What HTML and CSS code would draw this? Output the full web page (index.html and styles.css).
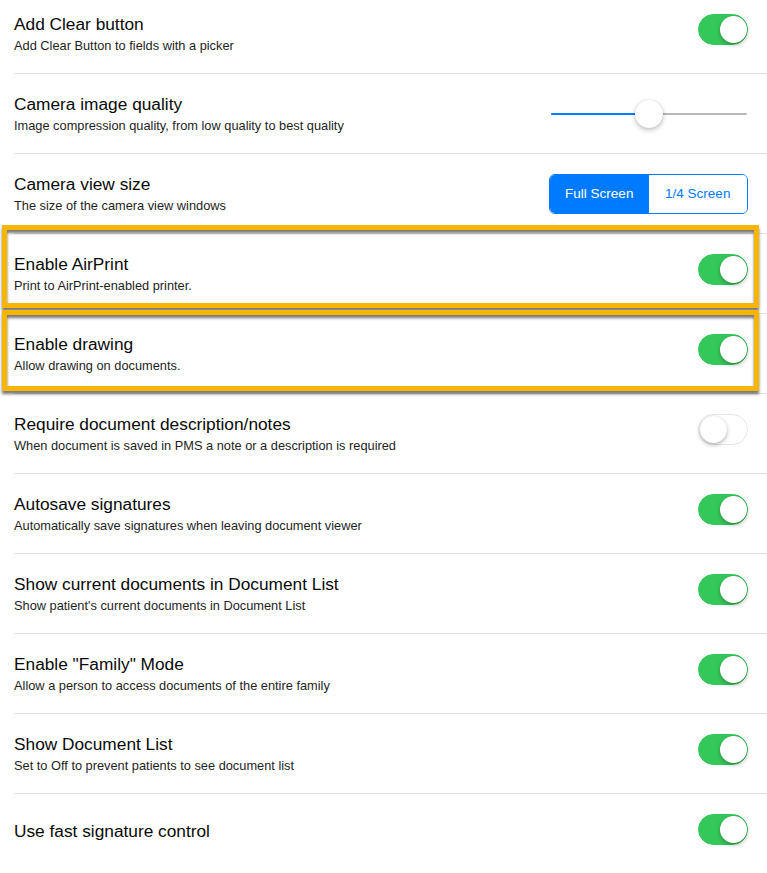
FILE: index.html
```html
<!DOCTYPE html>
<html lang="en">
<head>
<meta charset="utf-8">
<title>Settings</title>
<link rel="stylesheet" href="styles.css">
</head>
<body>
<ul class="settings">
  <li class="row">
    <div class="label">
      <div class="title">Add Clear button</div>
      <div class="detail">Add Clear Button to fields with a picker</div>
    </div>
    <span class="switch on"><span class="knob"></span></span>
  </li>
  <li class="row">
    <div class="label">
      <div class="title">Camera image quality</div>
      <div class="detail">Image compression quality, from low quality to best quality</div>
    </div>
    <div class="slider">
      <span class="fill" style="width:50%"></span>
      <span class="thumb" style="left:50%"></span>
    </div>
  </li>
  <li class="row">
    <div class="label">
      <div class="title">Camera view size</div>
      <div class="detail">The size of the camera view windows</div>
    </div>
    <div class="segmented">
      <span class="segment selected">Full Screen</span>
      <span class="segment">1/4 Screen</span>
    </div>
  </li>
  <li class="row marked marked-first">
    <div class="label">
      <div class="title">Enable AirPrint</div>
      <div class="detail">Print to AirPrint-enabled printer.</div>
    </div>
    <span class="switch on"><span class="knob"></span></span>
  </li>
  <li class="row marked marked-second">
    <div class="label">
      <div class="title">Enable drawing</div>
      <div class="detail">Allow drawing on documents.</div>
    </div>
    <span class="switch on"><span class="knob"></span></span>
  </li>
  <li class="row">
    <div class="label">
      <div class="title">Require document description/notes</div>
      <div class="detail">When document is saved in PMS a note or a description is required</div>
    </div>
    <span class="switch"><span class="knob"></span></span>
  </li>
  <li class="row">
    <div class="label">
      <div class="title">Autosave signatures</div>
      <div class="detail">Automatically save signatures when leaving document viewer</div>
    </div>
    <span class="switch on"><span class="knob"></span></span>
  </li>
  <li class="row">
    <div class="label">
      <div class="title">Show current documents in Document List</div>
      <div class="detail">Show patient's current documents in Document List</div>
    </div>
    <span class="switch on"><span class="knob"></span></span>
  </li>
  <li class="row">
    <div class="label">
      <div class="title">Enable "Family" Mode</div>
      <div class="detail">Allow a person to access documents of the entire family</div>
    </div>
    <span class="switch on"><span class="knob"></span></span>
  </li>
  <li class="row">
    <div class="label">
      <div class="title">Show Document List</div>
      <div class="detail">Set to Off to prevent patients to see document list</div>
    </div>
    <span class="switch on"><span class="knob"></span></span>
  </li>
  <li class="row single">
    <div class="label">
      <div class="title">Use fast signature control</div>
    </div>
    <span class="switch on"><span class="knob"></span></span>
  </li>
</ul>
</body>
</html>
```

FILE: styles.css
```css
html, body {
  margin: 0;
  padding: 0;
  background: #ffffff;
  overflow: hidden;
}

body {
  font-family: "Liberation Sans", Arial, sans-serif;
  color: #000;
}

/* settings list */
.settings {
  list-style: none;
  margin: -6px 0 0;
  padding: 0 0 0 14px;
}

.row {
  position: relative;
  display: flex;
  align-items: center;
  justify-content: space-between;
  height: 79px;
  padding-right: 19px;
  border-bottom: 1px solid #e3e3e3;
}

.title {
  font-size: 17.3px;
  line-height: 20px;
  color: #0a0a0a;
}

.detail {
  margin-top: 4px;
  font-size: 12.8px;
  line-height: 16px;
  color: #1e1e1e;
}

.row.single .label {
  padding-bottom: 6px;
}

/* highlighted rows */
.row.marked::after {
  content: "";
  position: absolute;
  left: -12px;
  right: 8px;
  border: 5px solid #f7b500;
  filter: drop-shadow(0 3px 1.5px rgba(0, 0, 0, 0.55));
  pointer-events: none;
  z-index: 2;
}

.row.marked-first::after {
  top: -9px;
  bottom: 5px;
}

.row.marked-second::after {
  top: -4px;
  bottom: 2px;
}

/* switch */
.switch {
  position: relative;
  flex: none;
  box-sizing: border-box;
  width: 50px;
  height: 31px;
  margin-bottom: 8px;
  border-radius: 16px;
  background: #ffffff;
  border: 1.5px solid #e6e6e9;
}

.switch.on {
  background: #34c759;
  border-color: #34c759;
}

.switch .knob {
  position: absolute;
  top: 0.5px;
  left: 0.5px;
  width: 27px;
  height: 27px;
  border-radius: 50%;
  background: #fff;
  box-shadow: 0 2px 4px rgba(0, 0, 0, 0.28), 0 0 1px rgba(0, 0, 0, 0.15);
}

.switch.on .knob {
  left: auto;
  right: 0.5px;
}

/* slider */
.slider {
  position: relative;
  flex: none;
  width: 196px;
  height: 2px;
  margin-right: 1px;
  background: #b8b8b8;
  border-radius: 1px;
}

.slider .fill {
  position: absolute;
  left: 0;
  top: 0;
  height: 2px;
  background: #007aff;
  border-radius: 1px;
}

.slider .thumb {
  position: absolute;
  top: 1px;
  width: 28px;
  height: 28px;
  margin: -14px 0 0 -14px;
  border-radius: 50%;
  background: #fff;
  box-shadow: 0 2px 5px rgba(0, 0, 0, 0.25), 0 0 1px rgba(0, 0, 0, 0.2);
}

/* segmented control */
.segmented {
  display: flex;
  flex: none;
  box-sizing: border-box;
  width: 199px;
  height: 40px;
  border: 1px solid #007aff;
  border-radius: 6px;
  overflow: hidden;
}

.segment {
  flex: 1;
  display: flex;
  align-items: center;
  justify-content: center;
  font-size: 13.5px;
  color: #007aff;
  background: #fff;
}

.segment.selected {
  color: #fff;
  background: #007aff;
}
```
